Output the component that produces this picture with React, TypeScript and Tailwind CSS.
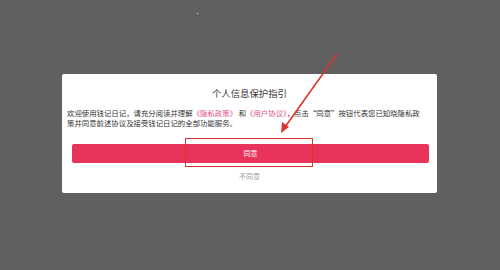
export default function App() {
  return (
    <div
      className="relative w-[500px] h-[270px] overflow-hidden bg-[#606060]"
      style={{ fontFamily: '"Noto Sans CJK SC", "Noto Sans", sans-serif' }}
    >
      <div className="pt-[74px] pl-[62px]">
        <div className="w-[375px] h-[119px] rounded-[2px] bg-white flex flex-col">
          <h2 className="mt-[12px] text-center text-[9.4px] leading-[14px] text-[#333]">
            个人信息保护指引
          </h2>
          <p className="mt-[8px] px-[5px] text-[7.4px] leading-[9.5px] text-[#333] whitespace-nowrap">
            欢迎使用钱记日记，请充分阅读并理解
            <span className="text-[#e0558a]">《隐私政策》</span> 和 
            <span className="text-[#e0558a]">《用户协议》</span>，点击“同意”按钮代表您已知晓隐私政
            <br />
            策并同意前述协议及接受钱记日记的全部功能服务。
          </p>
          <button className="mt-[17px] ml-[10px] w-[357px] h-[19px] rounded-[2px] bg-[#e8335b] text-white text-[7px] leading-[19px]">
            同意
          </button>
          <div className="mt-[8px] text-center text-[7px] leading-[10px] text-[#9a9a9a]">
            不同意
          </div>
        </div>
      </div>

      {/* annotation overlay */}
      <div className="absolute left-[197px] top-[13px] w-px h-px bg-white/80" />
      <div className="absolute left-[185px] top-[138px] w-[128px] h-[29px] border border-[#d9362f]" />
      <svg className="absolute left-0 top-0" width="500" height="270">
        <line x1="337" y1="54" x2="285" y2="127" stroke="#d9362f" strokeWidth="1.6" />
        <polygon points="281,133 282,122 289,127" fill="#d9362f" />
      </svg>
    </div>
  );
}
